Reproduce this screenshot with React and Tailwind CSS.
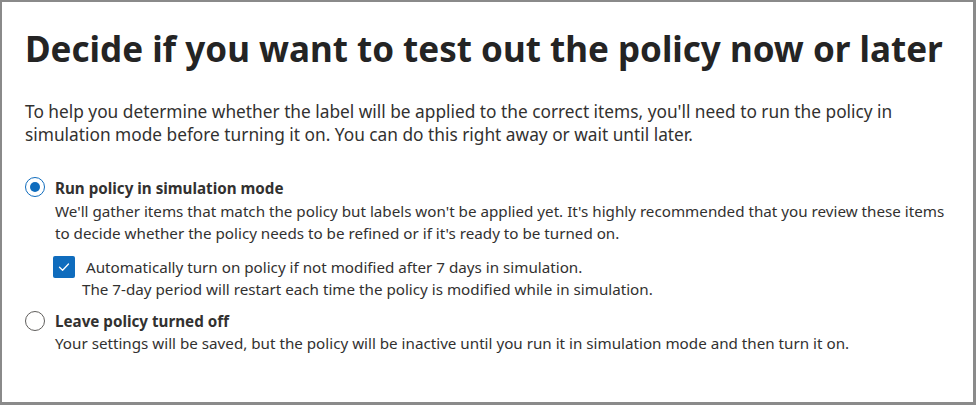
import React from 'react';

const Radio = ({ checked }) => (
  <span
    className={`flex h-[20px] w-[20px] shrink-0 items-center justify-center rounded-full border ${
      checked ? 'border-[#0f6cbd]' : 'border-[#605e5c]'
    } bg-white`}
  >
    {checked && <span className="h-[10px] w-[10px] rounded-full bg-[#0f6cbd]" />}
  </span>
);

const Checkbox = () => (
  <span className="flex h-[22px] w-[22px] shrink-0 items-center justify-center rounded-[2px] bg-[#0f6cbd]">
    <svg width="14" height="14" viewBox="0 0 14 14" fill="none">
      <path d="M2.5 7.2 L5.6 10.2 L11.5 4" stroke="white" strokeWidth="1.3" strokeLinecap="round" strokeLinejoin="round" />
    </svg>
  </span>
);

export default function App() {
  return (
    <div className="h-[405px] w-[976px] border-2 border-r-[3px] border-b-[3px] border-[#8a8a8a] bg-white font-['Noto_Sans',sans-serif] text-[#323130]">
      <div className="pl-[23px] pt-[22px]">
        <h1 className="whitespace-nowrap text-[35px] font-bold leading-[50px] text-[#242424]">
          Decide if you want to test out the policy now or later
        </h1>

        <p className="mt-[26px] w-[930px] text-[17.3px] leading-[23px]">
          To help you determine whether the label will be applied to the correct items, you'll need to run the policy in
          <br />
          simulation mode before turning it on. You can do this right away or wait until later.
        </p>

        <div className="mt-[30px] flex flex-col">
          <div className="flex items-start gap-[10px]">
            <div className="pt-[1px]">
              <Radio checked />
            </div>
            <div className="flex flex-col">
              <span className="text-[15.2px] font-bold leading-[24px]">Run policy in simulation mode</span>
              <p className="text-[15.2px] leading-[22px]">
                We'll gather items that match the policy but labels won't be applied yet. It's highly recommended that you review these items
                <br />
                to decide whether the policy needs to be refined or if it's ready to be turned on.
              </p>
              <div className="-ml-[2px] mt-[12px] flex items-start gap-[11px]">
                <Checkbox />
                <div className="flex flex-col">
                  <span className="text-[15.2px] leading-[22px]">Automatically turn on policy if not modified after 7 days in simulation.</span>
                  <span className="-ml-[4px] text-[15.2px] leading-[22px]">
                    The 7-day period will restart each time the policy is modified while in simulation.
                  </span>
                </div>
              </div>
            </div>
          </div>

          <div className="mt-[10px] flex items-start gap-[10px]">
            <div className="pt-[1px]">
              <Radio />
            </div>
            <div className="flex flex-col">
              <span className="text-[15.2px] font-bold leading-[22px]">Leave policy turned off</span>
              <p className="text-[15.2px] leading-[22px]">
                Your settings will be saved, but the policy will be inactive until you run it in simulation mode and then turn it on.
              </p>
            </div>
          </div>
        </div>
      </div>
    </div>
  );
}
